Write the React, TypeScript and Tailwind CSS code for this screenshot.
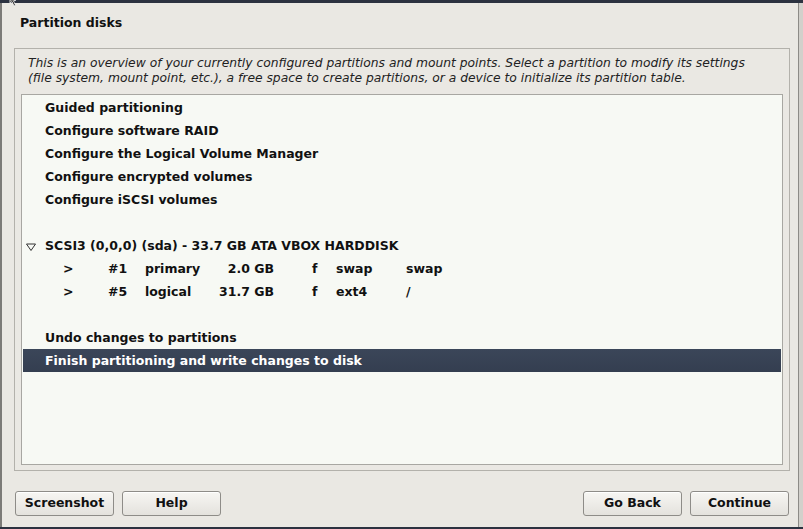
import React from "react";

const font = { fontFamily: '"DejaVu Sans", "Liberation Sans", sans-serif' };

function Row({ children, selected }: { children: React.ReactNode; selected?: boolean }) {
  return (
    <div
      className={
        "h-[23px] flex items-center pl-[22px] pt-[2px] text-[12.5px] font-bold whitespace-nowrap " +
        (selected ? "bg-gradient-to-b from-[#3b4659] to-[#343e50] text-white" : "text-[#111]")
      }
    >
      {children}
    </div>
  );
}

function PartRow({ num, type, size, fs, mount }: { num: string; type: string; size: string; fs: string; mount: string }) {
  return (
    <div className="h-[23px] flex items-center pt-[2px] text-[12.5px] font-bold text-[#111] whitespace-nowrap">
      <span className="w-[85px] pl-[40px]">&gt;</span>
      <span className="w-[37px]">{num}</span>
      <span className="w-[65px]">{type}</span>
      <span className="w-[64px] text-right">{size}</span>
      <span className="w-[38px]" />
      <span className="w-[24px]">f</span>
      <span className="w-[70px]">{fs}</span>
      <span>{mount}</span>
    </div>
  );
}

function Btn({ label }: { label: string }) {
  return (
    <button className="w-[99px] h-[25px] rounded-[3px] border border-[#8e8c88] bg-gradient-to-b from-[#f7f6f3] to-[#e4e2dd] text-[12.5px] font-bold text-[#111] flex items-center justify-center shadow-[inset_0_1px_0_#ffffff]">
      {label}
    </button>
  );
}

export default function App() {
  return (
    <div className="relative w-[803px] h-[529px] bg-[#2c3240] overflow-hidden" style={font}>
      <div className="absolute top-0 left-0 w-[803px] h-[529px] pt-[3px] flex">
        <div className="w-[798px] h-[524px] bg-[#eae8e3] border-l-2 border-[#7c7b78] flex flex-col">
          <div className="h-[45px] pl-[18px] pt-[12px] text-[12.5px] font-bold text-[#111] leading-[16px]">
            Partition disks
          </div>
          <div className="ml-[12px] w-[776px] h-[423px] border border-[#b3b1ab] flex flex-col">
            <div className="pl-[13px] pt-[7px] text-[12.3px] italic text-[#222] leading-[15px] whitespace-nowrap">
              <div>This is an overview of your currently configured partitions and mount points. Select a partition to modify its settings</div>
              <div>(file system, mount point, etc.), a free space to create partitions, or a device to initialize its partition table.</div>
            </div>
            <div className="mx-[6px] mt-[8px] h-[371px] border border-[#a8a7a2] bg-[#f7f9f4] p-[1px]">
              <Row>Guided partitioning</Row>
              <Row>Configure software RAID</Row>
              <Row>Configure the Logical Volume Manager</Row>
              <Row>Configure encrypted volumes</Row>
              <Row>Configure iSCSI volumes</Row>
              <div className="h-[23px]" />
              <div className="h-[23px] flex items-center pt-[2px] text-[12.5px] font-bold text-[#111] whitespace-nowrap">
                <span className="w-[22px] pl-[2px] flex items-center">
                  <svg width="12" height="10" viewBox="0 0 12 10">
                    <path d="M1.5 2 L10.5 2 L6 8.5 Z" fill="none" stroke="#333" strokeWidth="1" />
                  </svg>
                </span>
                SCSI3 (0,0,0) (sda) - 33.7 GB ATA VBOX HARDDISK
              </div>
              <PartRow num="#1" type="primary" size="2.0 GB" fs="swap" mount="swap" />
              <PartRow num="#5" type="logical" size="31.7 GB" fs="ext4" mount="/" />
              <div className="h-[23px]" />
              <Row>Undo changes to partitions</Row>
              <Row selected>Finish partitioning and write changes to disk</Row>
            </div>
          </div>
          <div className="mt-[20px] pl-[13px] pr-[9px] flex items-center">
            <Btn label="Screenshot" />
            <div className="w-[8px]" />
            <Btn label="Help" />
            <div className="flex-1" />
            <Btn label="Go Back" />
            <div className="w-[8px]" />
            <Btn label="Continue" />
          </div>
        </div>
        <div className="w-[5px] h-[524px] bg-[#d2d0cb] border-l border-[#8d8b87]" />
      </div>
      <svg className="absolute left-[9px] top-0" width="10" height="8" viewBox="0 0 10 8">
        <path d="M1 0 L1 3 L3 1.5 L5 6 L6.5 5.3 L4.5 1 L7 0 Z" fill="#111" stroke="#fff" strokeWidth="0.8" />
      </svg>
    </div>
  );
}
